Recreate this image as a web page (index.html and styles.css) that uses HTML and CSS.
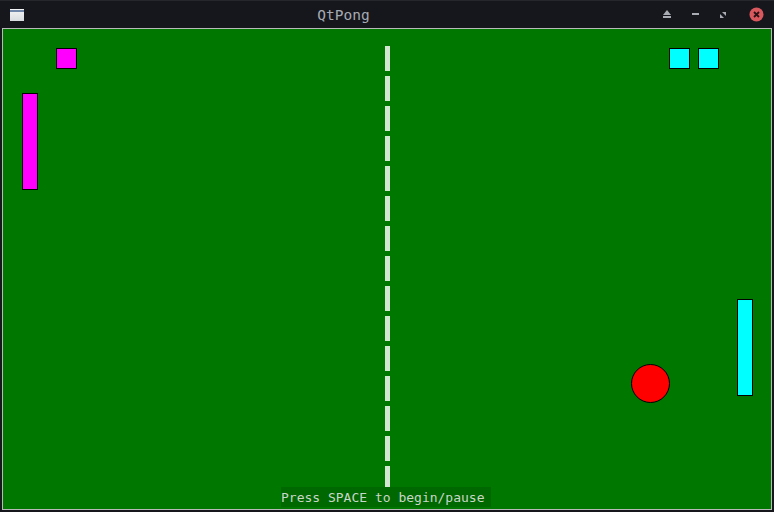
FILE: index.html
```html
<!DOCTYPE html>
<html>
<head>
<meta charset="utf-8">
<title>QtPong</title>
<link rel="stylesheet" href="styles.css">
</head>
<body>
<div class="window">
  <div class="titlebar">
    <div class="appicon"><div class="appicon-bar"></div></div>
    <div class="title">QtPong</div>
    <div class="controls">
      <svg class="ctl" width="10" height="9" viewBox="0 0 10 9"><path d="M5 0 L9 5 L1 5 Z" fill="#a9acb3"/><rect x="1" y="6" width="8" height="2" fill="#a9acb3"/></svg>
      <svg class="ctl ctl-min" width="8" height="3" viewBox="0 0 8 3"><rect x="0" y="0" width="7" height="2" fill="#a9acb3"/></svg>
      <svg class="ctl" width="8" height="8" viewBox="0 0 8 8"><path d="M3 1 L7 1 L7 5 Z" fill="#a9acb3"/><path d="M1 3 L1 7 L5 7 Z" fill="#a9acb3"/></svg>
      <svg class="ctl close" width="15" height="15" viewBox="0 0 15 15"><circle cx="7.5" cy="7.5" r="7" fill="#d9585d"/><path d="M5 5 L10 10 M10 5 L5 10" stroke="#2a1214" stroke-width="1.8"/></svg>
    </div>
  </div>
  <div class="frame">
    <div class="field">
      <div class="score score-l1"></div>
      <div class="score score-r1"></div>
      <div class="score score-r2"></div>
      <div class="paddle paddle-left"></div>
      <div class="paddle paddle-right"></div>
      <div class="ball"></div>
      <div class="net">
        <div class="dash"></div><div class="dash"></div><div class="dash"></div>
        <div class="dash"></div><div class="dash"></div><div class="dash"></div>
        <div class="dash"></div><div class="dash"></div><div class="dash"></div>
        <div class="dash"></div><div class="dash"></div><div class="dash"></div>
        <div class="dash"></div><div class="dash"></div><div class="dash"></div>
      </div>
      <div class="hint">Press SPACE to begin/pause</div>
    </div>
  </div>
</div>
</body>
</html>
```
FILE: styles.css
```css
html, body {
  margin: 0;
  padding: 0;
  background: #16171d;
}
.window {
  width: 774px;
  height: 512px;
  background: #16171d;
  overflow: hidden;
}
.titlebar {
  height: 28px;
  display: flex;
  align-items: center;
  position: relative;
  border-top: 1px solid #26272d;
  box-sizing: border-box;
}
.appicon {
  width: 14px;
  height: 12px;
  margin-left: 10px;
  background: linear-gradient(#f4f5f6, #d9dcdf);
  display: flex;
  flex-direction: column;
}
.appicon-bar {
  height: 2px;
  margin-top: 1px;
  background: #6f86a8;
}
.title {
  flex: 1;
  text-align: center;
  font-family: "DejaVu Sans Mono", monospace;
  font-size: 14.5px;
  color: #a6aab2;
  padding-left: 20px;
}
.controls {
  display: flex;
  align-items: center;
  margin-right: 10px;
}
.ctl {
  display: block;
  margin-left: 19px;
}
.ctl-min {
  margin-left: 20px;
}
.close {
  margin-left: 22px;
}
.frame {
  margin-left: 2px;
  width: 770px;
  height: 482px;
  border: 1px solid #b9b9b9;
  box-sizing: border-box;
}
.field {
  position: relative;
  width: 768px;
  height: 480px;
  background: #007800;
}
.score {
  position: absolute;
  top: 19px;
  width: 21px;
  height: 21px;
  box-sizing: border-box;
  border: 1px solid #000;
}
.score-l1 { left: 53px; background: #ff00ff; }
.score-r1 { left: 666px; background: #00ffff; }
.score-r2 { left: 695px; background: #00ffff; }
.paddle {
  position: absolute;
  width: 16px;
  height: 97px;
  box-sizing: border-box;
  border: 1px solid #000;
}
.paddle-left { left: 19px; top: 64px; background: #ff00ff; }
.paddle-right { left: 734px; top: 270px; background: #00ffff; }
.ball {
  position: absolute;
  left: 628px;
  top: 335px;
  width: 39px;
  height: 39px;
  box-sizing: border-box;
  border: 1px solid #000;
  border-radius: 50%;
  background: #ff0000;
}
.net {
  position: absolute;
  left: 382px;
  top: 17px;
  display: flex;
  flex-direction: column;
  gap: 5px;
}
.dash {
  width: 5px;
  height: 25px;
  background: #d2e6d2;
}
.hint {
  position: absolute;
  left: 278px;
  top: 458px;
  width: 210px;
  height: 20px;
  background: #006800;
  color: #c9d6c9;
  font-family: "DejaVu Sans Mono", monospace;
  font-size: 13px;
  line-height: 21px;
  white-space: nowrap;
}
```
